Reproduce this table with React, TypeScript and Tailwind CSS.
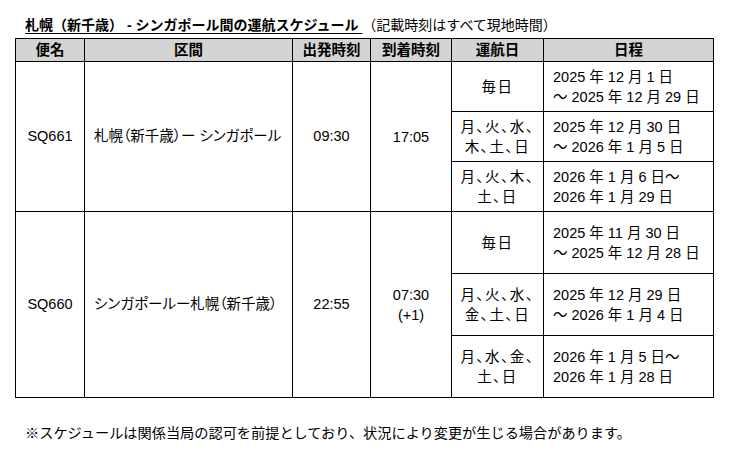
import React from "react";

type Sub = { days: string[]; range: string[] };
type Flight = { no: string; route: string; dep: string; arr: string[]; subs: Sub[]; h: string };

const flights: Flight[] = [
  {
    no: "SQ661",
    route: "札幌（新千歳）ー シンガポール",
    dep: "09:30",
    arr: ["17:05"],
    h: "h-[50px]",
    subs: [
      { days: ["毎日"], range: ["2025 年 12 月 1 日", "～ 2025 年 12 月 29 日"] },
      { days: ["月、火、水、", "木、土、日"], range: ["2025 年 12 月 30 日", "～ 2026 年 1 月 5 日"] },
      { days: ["月、火、木、", "土、日"], range: ["2026 年 1 月 6 日～", "2026 年 1 月 29 日"] },
    ],
  },
  {
    no: "SQ660",
    route: "シンガポールー札幌（新千歳）",
    dep: "22:55",
    arr: ["07:30", "(+1)"],
    h: "h-[62px]",
    subs: [
      { days: ["毎日"], range: ["2025 年 11 月 30 日", "～ 2025 年 12 月 28 日"] },
      { days: ["月、火、水、", "金、土、日"], range: ["2025 年 12 月 29 日", "～ 2026 年 1 月 4 日"] },
      { days: ["月、水、金、", "土、日"], range: ["2026 年 1 月 5 日～", "2026 年 1 月 28 日"] },
    ],
  },
];

const cell = "border border-black align-middle";
const palt = { fontFeatureSettings: '"palt"' };

export default function App() {
  return (
    <div
      className="w-[732px] h-[450px] bg-white text-black pl-[15px] pt-[15px] text-[14.5px]"
      style={{ fontFamily: '"Liberation Sans", "Noto Sans CJK JP", sans-serif' }}
    >
      <div className="pl-[10px] h-[23px] leading-[20px] text-[14px] whitespace-nowrap">
        <span className="font-bold underline underline-offset-[3px]">
          札幌（新千歳） - シンガポール間の運航スケジュール{" "}
        </span>
        <span>（記載時刻はすべて現地時間）</span>
      </div>
      <table className="table-fixed border-collapse w-[698px]">
        <colgroup>
          <col className="w-[69px]" />
          <col className="w-[208px]" />
          <col className="w-[78px]" />
          <col className="w-[81px]" />
          <col className="w-[92px]" />
          <col className="w-[170px]" />
        </colgroup>
        <thead>
          <tr className="h-[23px] bg-[#d4d4d4]">
            {["便名", "区間", "出発時刻", "到着時刻", "運航日", "日程"].map((t) => (
              <th key={t} className={`${cell} font-bold text-center leading-[20px] p-0`}>
                {t}
              </th>
            ))}
          </tr>
        </thead>
        <tbody>
          {flights.map((f) =>
            f.subs.map((s, i) => (
              <tr key={f.no + i} className={f.h}>
                {i === 0 && (
                  <>
                    <td rowSpan={3} className={`${cell} text-center`}>{f.no}</td>
                    <td rowSpan={3} className={`${cell} text-left pl-[9px] whitespace-nowrap`} style={palt}>
                      {f.route}
                    </td>
                    <td rowSpan={3} className={`${cell} text-center`}>{f.dep}</td>
                    <td rowSpan={3} className={`${cell} text-center leading-[20px]`}>
                      {f.arr.map((a) => (
                        <div key={a}>{a}</div>
                      ))}
                    </td>
                  </>
                )}
                <td className={`${cell} text-center leading-[20px] tracking-[1.5px]`} style={palt}>
                  {s.days.map((d) => (
                    <div key={d}>{d}</div>
                  ))}
                </td>
                <td className={`${cell} text-left pl-[9px] leading-[20px] whitespace-nowrap`}>
                  {s.range.map((r) => (
                    <div key={r}>{r}</div>
                  ))}
                </td>
              </tr>
            ))
          )}
        </tbody>
      </table>
      <div className="pl-[10px] pt-[25px] text-[14.2px] whitespace-nowrap">
        ※スケジュールは関係当局の認可を前提としており、状況により変更が生じる場合があります。
      </div>
    </div>
  );
}
